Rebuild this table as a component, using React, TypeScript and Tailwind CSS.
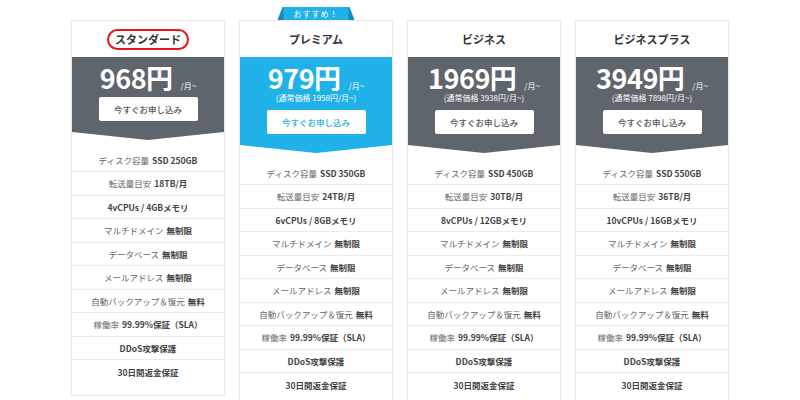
import React from "react";

type Plan = {
  name: string;
  price: string;
  orig: string | null;
  blue: boolean;
  ssd: string;
  transfer: string;
  cpu: string;
  circled?: boolean;
  badge?: boolean;
};

const plans: Plan[] = [
  { name: "スタンダード", price: "968", orig: null, blue: false, ssd: "SSD 250GB", transfer: "18TB/月", cpu: "4vCPUs / 4GBメモリ", circled: true },
  { name: "プレミアム", price: "979", orig: "1958", blue: true, ssd: "SSD 350GB", transfer: "24TB/月", cpu: "6vCPUs / 8GBメモリ", badge: true },
  { name: "ビジネス", price: "1969", orig: "3938", blue: false, ssd: "SSD 450GB", transfer: "30TB/月", cpu: "8vCPUs / 12GBメモリ" },
  { name: "ビジネスプラス", price: "3949", orig: "7898", blue: false, ssd: "SSD 550GB", transfer: "36TB/月", cpu: "10vCPUs / 16GBメモリ" },
];

function Row({ normal, bold, last }: { normal?: string; bold?: string; last?: boolean }) {
  return (
    <div
      className={
        "h-[23.5px] flex items-center justify-center text-[8.5px] leading-none text-[#666] " +
        (last ? "" : "border-b border-[#ececec]")
      }
    >
      {normal && <span>{normal}</span>}
      {normal && bold && <span className="w-[3px]" />}
      {bold && <span className="font-bold text-[#444]">{bold}</span>}
    </div>
  );
}

function Card({ p }: { p: Plan }) {
  const bg = p.blue ? "bg-[#1fb1e8]" : "bg-[#5e656c]";
  const rows: { normal?: string; bold?: string }[] = [
    { normal: "ディスク容量", bold: p.ssd },
    { normal: "転送量目安", bold: p.transfer },
    { bold: p.cpu },
    { normal: "マルチドメイン", bold: "無制限" },
    { normal: "データベース", bold: "無制限" },
    { normal: "メールアドレス", bold: "無制限" },
    { normal: "自動バックアップ＆復元", bold: "無料" },
    { normal: "稼働率", bold: "99.99%保証（SLA）" },
    { bold: "DDoS攻撃保護" },
    { bold: "30日間返金保証" },
  ];
  return (
    <div className="relative w-[154px] shrink-0 bg-white border border-[#ebebeb] shadow-[0_0_2px_rgba(0,0,0,0.04)]">
      {p.badge && (
        <div className="absolute left-1/2 -translate-x-1/2 top-[-14px] w-[77px] h-[13px]">
          <svg width="77" height="13" viewBox="0 0 77 13" className="absolute inset-0">
            <polygon points="0,13 5,0 72,0 77,13" fill="#1689b8" />
            <rect x="6" y="0" width="65" height="13" fill="#1fb1e8" />
          </svg>
          <div className="relative h-full flex items-center justify-center text-[8px] leading-none text-white tracking-[1px]">
            おすすめ！
          </div>
        </div>
      )}
      <div className="h-[36px] flex items-center justify-center">
        {p.circled ? (
          <span className="inline-flex items-center justify-center h-[21px] px-[6px] rounded-full border-2 border-[#e8141b] text-[11px] font-bold text-[#333] leading-none">
            {p.name}
          </span>
        ) : (
          <span className="text-[11px] font-bold text-[#333] leading-none">{p.name}</span>
        )}
      </div>
      <div className={bg + " flex flex-col items-center pt-[7.5px] pb-[11px]"}>
        <div className="flex items-baseline h-[26px] text-white">
          <span className="text-[27px] font-bold leading-[26px] tracking-[-0.5px]">{p.price}円</span>
          <span className="ml-[8px] text-[8px] leading-none">/月~</span>
        </div>
        {p.orig && (
          <div className="mt-[2px] h-[11px] flex items-center text-[8px] leading-none text-white">
            (通常価格 {p.orig}円/月~)
          </div>
        )}
        <div
          className={
            "mt-[6.5px] w-[99px] h-[24px] bg-white rounded-[2px] flex items-center justify-center text-[8.5px] leading-none font-medium " +
            (p.blue ? "text-[#1fb1e8]" : "text-[#555]")
          }
        >
          今すぐお申し込み
        </div>
      </div>
      <div className={bg + " h-[8px] [clip-path:polygon(0_0,100%_0,50%_100%)]"} />
      <div className="pt-[8.5px] pb-[11px]">
        {rows.map((r, i) => (
          <Row key={i} normal={r.normal} bold={r.bold} last={i === rows.length - 1} />
        ))}
      </div>
    </div>
  );
}

export default function App() {
  return (
    <div className="w-[800px] h-[400px] overflow-hidden bg-white font-['Noto_Sans_CJK_JP','Noto_Sans',sans-serif]">
      <div className="flex items-start justify-center gap-[14px] pt-[20px]">
        {plans.map((p) => (
          <Card key={p.name} p={p} />
        ))}
      </div>
    </div>
  );
}
